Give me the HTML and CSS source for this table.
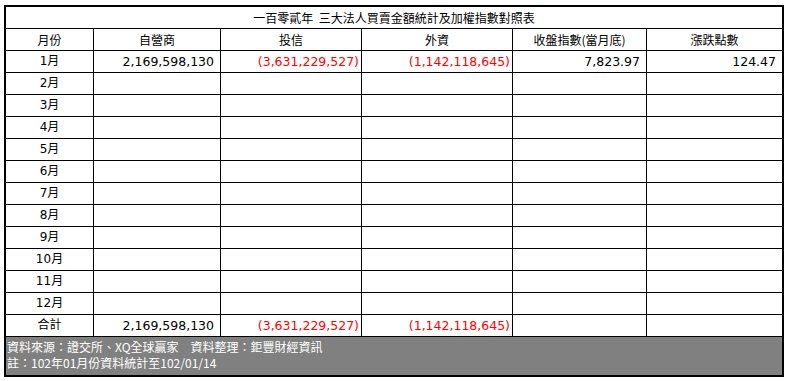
FILE: index.html
```html
<!DOCTYPE html>
<html lang="zh-Hant">
<head>
<meta charset="utf-8">
<title>三大法人買賣金額統計及加權指數對照表</title>
<link rel="stylesheet" href="styles.css">
</head>
<body>
<div class="sheet">
  <div class="c title">一百零貳年&nbsp;&nbsp;三大法人買賣金額統計及加權指數對照表</div>

  <div class="c hd">月份</div>
  <div class="c hd">自營商</div>
  <div class="c hd">投信</div>
  <div class="c hd">外資</div>
  <div class="c hd">收盤指數(當月底)</div>
  <div class="c hd last">漲跌點數</div>

  <div class="c lbl">1月</div>
  <div class="c num pos">2,169,598,130</div>
  <div class="c num neg">(3,631,229,527)</div>
  <div class="c num neg">(1,142,118,645)</div>
  <div class="c num pos">7,823.97</div>
  <div class="c num pos last">124.47</div>

  <div class="c lbl">2月</div><div class="c"></div><div class="c"></div><div class="c"></div><div class="c"></div><div class="c last"></div>
  <div class="c lbl">3月</div><div class="c"></div><div class="c"></div><div class="c"></div><div class="c"></div><div class="c last"></div>
  <div class="c lbl">4月</div><div class="c"></div><div class="c"></div><div class="c"></div><div class="c"></div><div class="c last"></div>
  <div class="c lbl">5月</div><div class="c"></div><div class="c"></div><div class="c"></div><div class="c"></div><div class="c last"></div>
  <div class="c lbl">6月</div><div class="c"></div><div class="c"></div><div class="c"></div><div class="c"></div><div class="c last"></div>
  <div class="c lbl">7月</div><div class="c"></div><div class="c"></div><div class="c"></div><div class="c"></div><div class="c last"></div>
  <div class="c lbl">8月</div><div class="c"></div><div class="c"></div><div class="c"></div><div class="c"></div><div class="c last"></div>
  <div class="c lbl">9月</div><div class="c"></div><div class="c"></div><div class="c"></div><div class="c"></div><div class="c last"></div>
  <div class="c lbl">10月</div><div class="c"></div><div class="c"></div><div class="c"></div><div class="c"></div><div class="c last"></div>
  <div class="c lbl">11月</div><div class="c"></div><div class="c"></div><div class="c"></div><div class="c"></div><div class="c last"></div>
  <div class="c lbl">12月</div><div class="c"></div><div class="c"></div><div class="c"></div><div class="c"></div><div class="c last"></div>

  <div class="c lbl">合計</div>
  <div class="c num pos">2,169,598,130</div>
  <div class="c num neg">(3,631,229,527)</div>
  <div class="c num neg">(1,142,118,645)</div>
  <div class="c"></div>
  <div class="c last"></div>

  <div class="foot">
    <div>資料來源：證交所、XQ全球贏家　資料整理：鉅豐財經資訊</div>
    <div>註：102年01月份資料統計至102/01/14</div>
  </div>
</div>
</body>
</html>
```

FILE: styles.css
```css
html, body {
  margin: 0;
  padding: 0;
  background: #fff;
}

body {
  padding: 5px 0 0 4px;
  font-family: "DejaVu Sans", "Noto Sans CJK TC", sans-serif;
  color: #000;
}

.sheet {
  display: grid;
  grid-template-columns: 88px 127px 141px 151px 134px 135px;
  width: 780px;
  box-sizing: border-box;
  border: 2px solid #000;
}

.c {
  box-sizing: border-box;
  height: 22px;
  line-height: 21px;
  border-right: 1px solid #000;
  border-bottom: 1px solid #000;
  font-size: 12.5px;
  white-space: nowrap;
  overflow: hidden;
}

.c.last {
  border-right: none;
}

.title {
  grid-column: 1 / -1;
  border-right: none;
  text-align: center;
  font-family: "Noto Sans CJK TC", sans-serif;
  font-size: 12px;
}

.hd {
  text-align: center;
  font-family: "Noto Sans CJK TC", sans-serif;
  font-size: 12px;
}

.lbl {
  text-align: center;
  font-size: 12px;
}

.num {
  text-align: right;
}

.pos {
  padding-right: 6px;
}

.neg {
  padding-right: 2px;
  color: #ff0000;
}

.foot {
  grid-column: 1 / -1;
  height: 38px;
  box-sizing: border-box;
  background: #808080;
  color: #fff;
  padding: 2px 0 0 1px;
  font-family: "Noto Sans CJK TC", sans-serif;
  font-size: 12px;
  line-height: 16px;
}
```
